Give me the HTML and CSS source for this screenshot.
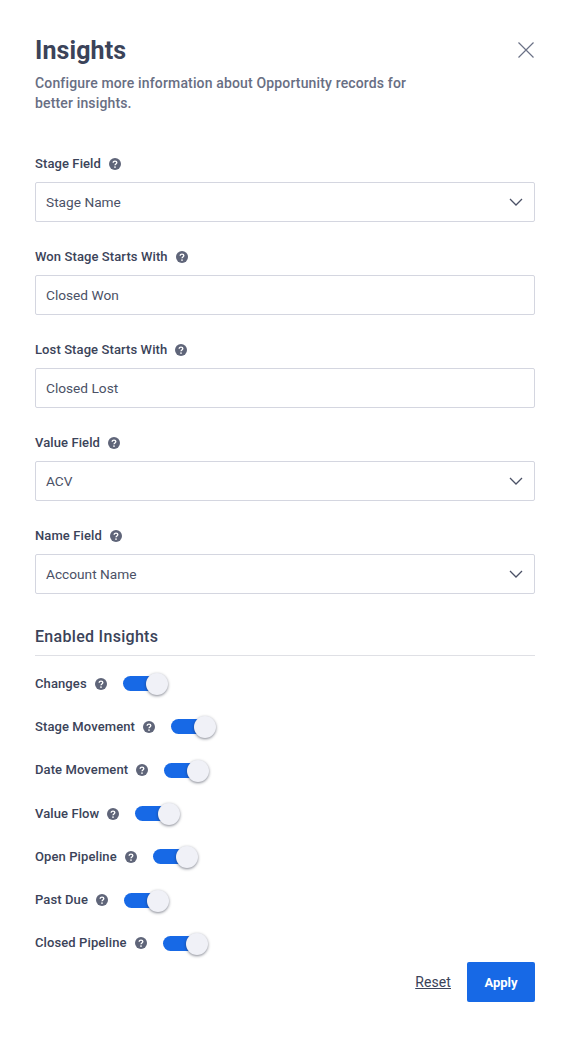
FILE: index.html
```html
<!DOCTYPE html>
<html lang="en">
<head>
<meta charset="utf-8">
<title>Insights</title>
<link rel="stylesheet" href="styles.css">
</head>
<body>
<svg class="defs" width="0" height="0" aria-hidden="true">
  <symbol id="help" viewBox="0 0 12 12">
    <circle cx="6" cy="6" r="6" fill="#5f6579"/>
    <path d="M4.2 4.7C4.2 3.7 5 3.1 6 3.1s1.8.6 1.8 1.5c0 1.4-1.8 1.4-1.8 2.7" fill="none" stroke="#fff" stroke-width="1.4"/>
    <circle cx="6" cy="9.1" r=".85" fill="#fff"/>
  </symbol>
  <symbol id="chev" viewBox="0 0 14 8">
    <path d="M1 1l6 6 6-6" fill="none" stroke="#4b5166" stroke-width="1.3"/>
  </symbol>
</svg>
<main class="panel">
  <header class="head">
    <div class="head-text">
      <h1 class="title">Insights</h1>
      <p class="desc">Configure more information about Opportunity records for better insights.</p>
    </div>
    <svg class="close" viewBox="0 0 16 16" width="16" height="16"><path d="M.5.5l15 15M15.5.5l-15 15" fill="none" stroke="#6b7186" stroke-width="1.2"/></svg>
  </header>

  <div class="field">
    <label class="label">Stage Field <svg class="help"><use href="#help"/></svg></label>
    <div class="input">Stage Name<svg class="chev"><use href="#chev"/></svg></div>
  </div>
  <div class="field">
    <label class="label">Won Stage Starts With <svg class="help"><use href="#help"/></svg></label>
    <div class="input">Closed Won</div>
  </div>
  <div class="field">
    <label class="label">Lost Stage Starts With <svg class="help"><use href="#help"/></svg></label>
    <div class="input">Closed Lost</div>
  </div>
  <div class="field">
    <label class="label">Value Field <svg class="help"><use href="#help"/></svg></label>
    <div class="input">ACV<svg class="chev"><use href="#chev"/></svg></div>
  </div>
  <div class="field">
    <label class="label">Name Field <svg class="help"><use href="#help"/></svg></label>
    <div class="input">Account Name<svg class="chev"><use href="#chev"/></svg></div>
  </div>

  <h2 class="section">Enabled Insights</h2>
  <ul class="toggles">
    <li class="row"><span class="label">Changes <svg class="help"><use href="#help"/></svg></span><span class="switch"></span></li>
    <li class="row"><span class="label">Stage Movement <svg class="help"><use href="#help"/></svg></span><span class="switch"></span></li>
    <li class="row"><span class="label">Date Movement <svg class="help"><use href="#help"/></svg></span><span class="switch"></span></li>
    <li class="row"><span class="label">Value Flow <svg class="help"><use href="#help"/></svg></span><span class="switch"></span></li>
    <li class="row"><span class="label">Open Pipeline <svg class="help"><use href="#help"/></svg></span><span class="switch"></span></li>
    <li class="row"><span class="label">Past Due <svg class="help"><use href="#help"/></svg></span><span class="switch"></span></li>
    <li class="row"><span class="label">Closed Pipeline <svg class="help"><use href="#help"/></svg></span><span class="switch"></span></li>
  </ul>

  <footer class="foot">
    <a class="reset">Reset</a>
    <button class="apply" type="button">Apply</button>
  </footer>
</main>
</body>
</html>
```
FILE: styles.css
```css
* { box-sizing: border-box; }
html, body { margin: 0; background: #fff; }
body { font-family: "Roboto", "Liberation Sans", sans-serif; color: #3b4359; }
.defs { position: absolute; }
.panel { width: 571px; height: 1039px; padding: 36px 36px 0 35px; display: flex; flex-direction: column; }
.head { display: flex; justify-content: space-between; align-items: flex-start; height: 119px; }
.head-text { width: 385px; }
.title { margin: 0; font-size: 25px; line-height: 30px; font-weight: 700; letter-spacing: .1px; color: #3b4359; }
.desc { margin: 7px 0 0; font-size: 14px; line-height: 20px; font-weight: 500; letter-spacing: .15px; color: #686e83; }
.close { margin: 6px 1px 0 0; }
.field { display: flex; flex-direction: column; height: 93px; }
.label { display: flex; align-items: center; gap: 8px; font-size: 13px; line-height: 18px; font-weight: 500; letter-spacing: .1px; color: #3b4359; }
.field .label { height: 18px; margin-bottom: 9px; }
.help { width: 12px; height: 12px; flex: none; }
.input { height: 40px; display: flex; align-items: center; justify-content: space-between; padding: 0 11px 0 10px; border: 1px solid #d4d6e0; border-radius: 2px; font-size: 13.7px; color: #4b5166; }
.chev { width: 14px; height: 8px; }
.section { margin: 0; height: 30px; padding-top: 0; font-size: 16px; line-height: 22px; font-weight: 500; letter-spacing: .3px; color: #3b4359; border-bottom: 1px solid #dfe0e5; margin-top: 6px; }
.toggles { list-style: none; margin: 0; padding: 6px 0 0; }
.row { display: flex; align-items: center; gap: 16px; height: 43.3px; }
.switch { position: relative; width: 38px; height: 15px; border-radius: 8px; background: #1769e6; }
.switch::after { content: ""; position: absolute; right: -7px; top: -3px; width: 22px; height: 22px; border-radius: 50%; background: #f0f1f7; box-shadow: 0 1px 3px rgba(30, 35, 55, .55); }
.foot { display: flex; justify-content: flex-end; align-items: center; gap: 16px; margin-top: -3px; }
.reset { font-size: 14px; letter-spacing: .1px; color: #3b4359; text-decoration: underline; }
.apply { width: 68px; height: 40px; border: 0; border-radius: 2px; background: #1769e6; color: #fff; font: 700 13px "Roboto", "Liberation Sans", sans-serif; }
```
